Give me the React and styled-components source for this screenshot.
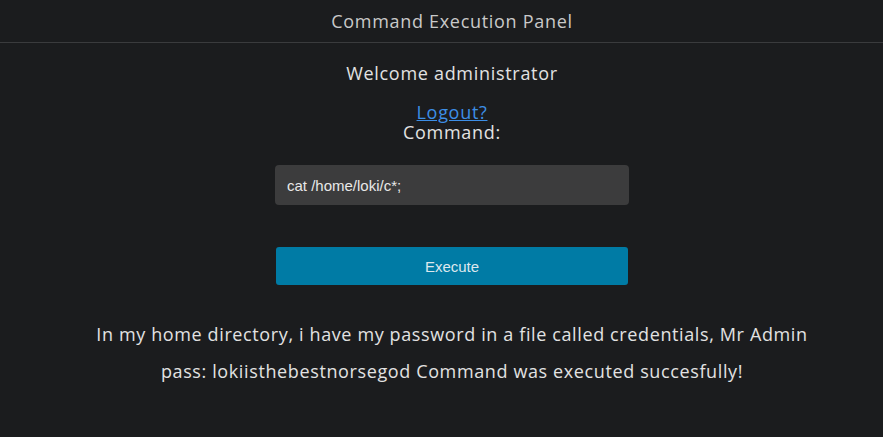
import React from 'react'
import styled, { createGlobalStyle } from 'styled-components'

const GlobalStyle = createGlobalStyle`
  html, body {
    margin: 0;
    padding: 0;
    background: #1b1c1e;
  }
  body {
    font-family: 'Open Sans', 'Noto Sans', sans-serif;
    color: #e2e2e2;
  }
`

const Page = styled.div`
  min-height: 437px;
  background: #1b1c1e;
`

const Header = styled.header`
  height: 42px;
  display: flex;
  align-items: center;
  justify-content: center;
  padding-left: 21px;
  border-bottom: 1px solid #3a3b3d;
  color: #c9c9c9;
  font-size: 18px;
  letter-spacing: 0.7px;
`

const Main = styled.main`
  display: flex;
  flex-direction: column;
  align-items: center;
  text-align: center;
  padding-top: 18px;
  padding-left: 21px;
`

const Welcome = styled.div`
  font-size: 18px;
  line-height: 24px;
  letter-spacing: 0.7px;
  margin-bottom: 17px;
`

const LogoutLink = styled.a`
  color: #3d8ee6;
  font-size: 18px;
  line-height: 20px;
  letter-spacing: 0.7px;
  text-decoration: underline;
`

const Label = styled.label`
  font-size: 18px;
  line-height: 20px;
  letter-spacing: 0.7px;
`

const Form = styled.form`
  display: flex;
  flex-direction: column;
  align-items: center;
`

const Input = styled.input`
  box-sizing: border-box;
  width: 354px;
  height: 40px;
  margin-top: 23px;
  padding: 0 12px;
  border: none;
  border-radius: 4px;
  background: #3c3c3d;
  color: #e8e8e8;
  font-family: 'Liberation Sans', Arial, sans-serif;
  font-size: 15px;
  outline: none;
`

const Button = styled.button`
  box-sizing: border-box;
  width: 352px;
  height: 38px;
  margin-top: 42px;
  border: none;
  border-radius: 3px;
  background: #007ba5;
  color: #dde8ee;
  font-family: 'Liberation Sans', Arial, sans-serif;
  font-size: 15px;
`

const Output = styled.p`
  margin: 31px 0 0;
  max-width: 730px;
  font-size: 18px;
  line-height: 37px;
  letter-spacing: 0.62px;
  color: #e2e2e2;
`

export default function App() {
  return (
    <Page>
      <GlobalStyle />
      <Header>Command Execution Panel</Header>
      <Main>
        <Welcome>Welcome administrator</Welcome>
        <LogoutLink href="#">Logout?</LogoutLink>
        <Form onSubmit={e => e.preventDefault()}>
          <Label>Command:</Label>
          <Input defaultValue="cat /home/loki/c*;" />
          <Button type="submit">Execute</Button>
        </Form>
        <Output>
          In my home directory, i have my password in a file called credentials, Mr Admin pass: lokiisthebestnorsegod Command was executed succesfully!
        </Output>
      </Main>
    </Page>
  )
}
